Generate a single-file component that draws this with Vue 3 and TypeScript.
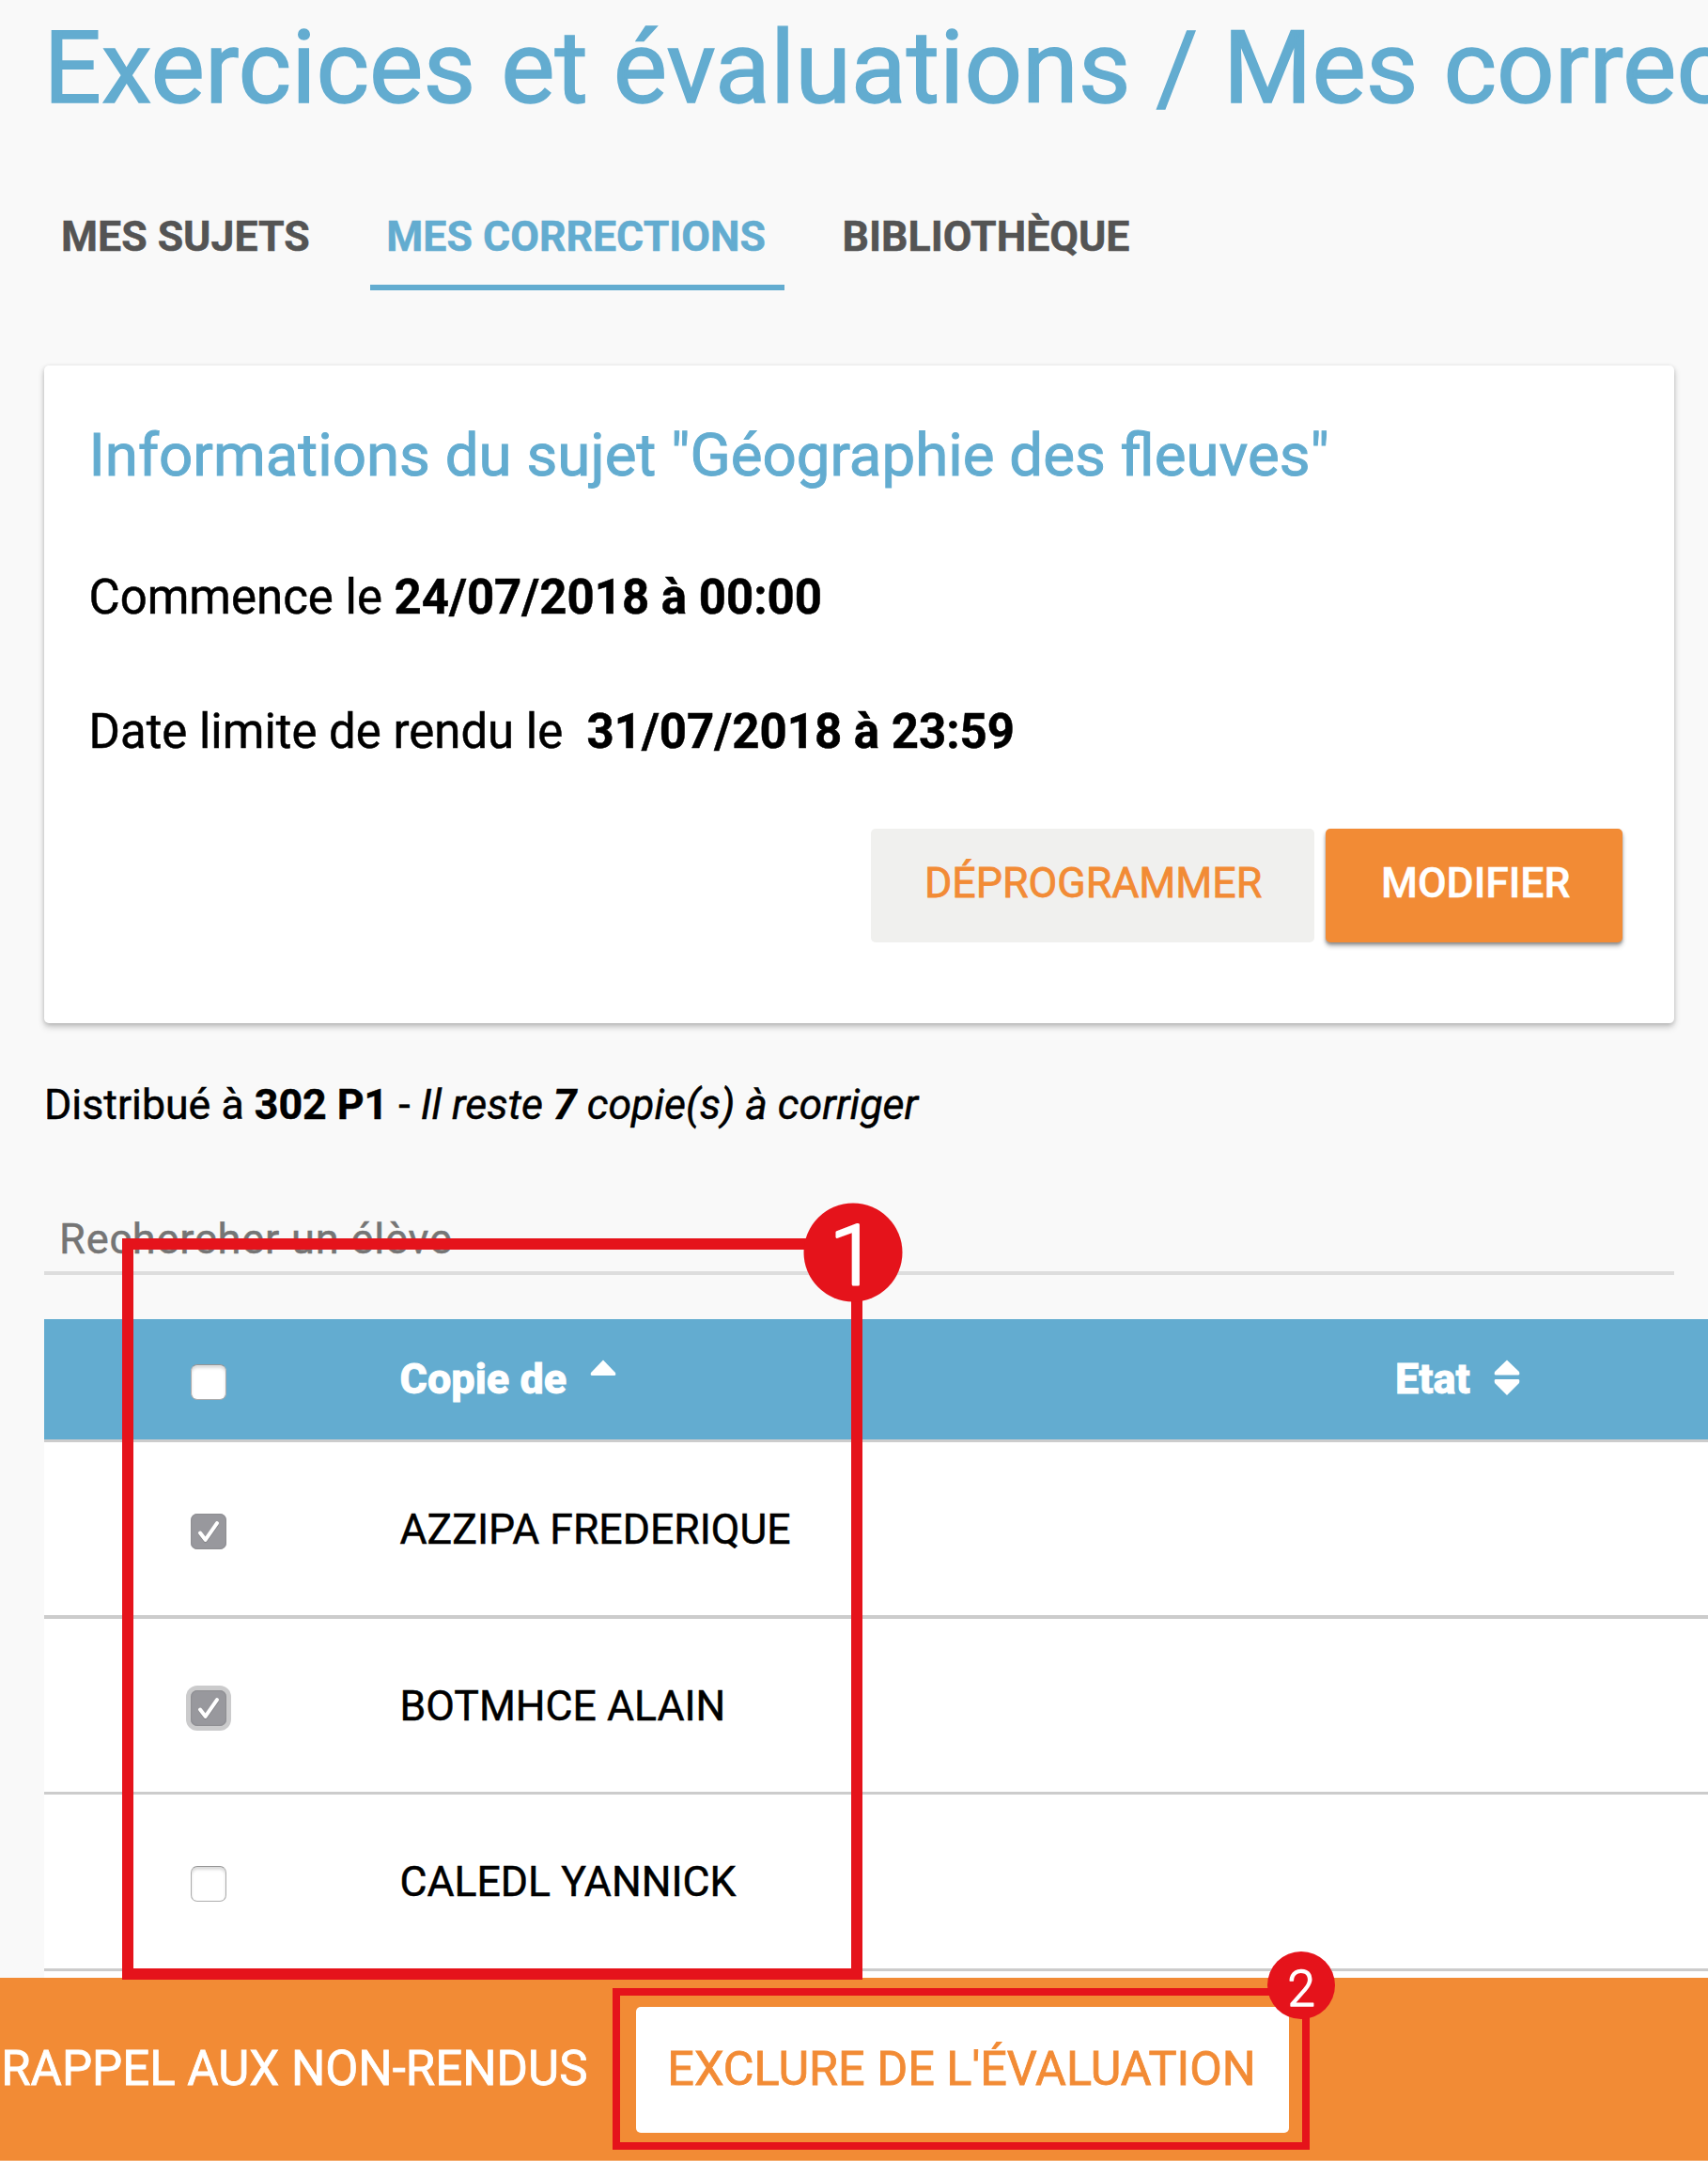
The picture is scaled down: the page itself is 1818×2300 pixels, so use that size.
<script setup lang="ts">
interface Student {
  name: string
  checked: boolean
  focused: boolean
}

const tabs = [
  { label: 'MES SUJETS', active: false },
  { label: 'MES CORRECTIONS', active: true },
  { label: 'BIBLIOTHÈQUE', active: false },
]

const students: Student[] = [
  { name: 'AZZIPA FREDERIQUE', checked: true, focused: false },
  { name: 'BOTMHCE ALAIN', checked: true, focused: true },
  { name: 'CALEDL YANNICK', checked: false, focused: false },
]
</script>

<template>
  <div class="page">
    <main class="content">
      <h1 class="title">Exercices et évaluations / Mes corrections</h1>

      <nav class="tabs">
        <a v-for="tab in tabs" :key="tab.label" class="tab" :class="{ active: tab.active }">{{ tab.label }}</a>
      </nav>

      <section class="card">
        <h2 class="card-title">Informations du sujet "Géographie des fleuves"</h2>
        <p class="line start">Commence le <b>24/07/2018 à 00:00</b></p>
        <p class="line due">Date limite de rendu le&nbsp; <b>31/07/2018 à 23:59</b></p>
        <div class="actions">
          <button class="btn flat">DÉPROGRAMMER</button>
          <button class="btn primary">MODIFIER</button>
        </div>
      </section>

      <p class="summary">Distribué à <b>302 P1</b> - <i>Il reste <b>7</b> copie(s) à corriger</i></p>

      <div class="search">Rechercher un élève</div>

      <div class="table">
        <div class="row head">
          <span class="check-cell"><span class="box"></span></span>
          <span class="name-cell">Copie de
            <svg class="sort" width="28" height="39" viewBox="0 0 28 39">
              <path d="M14 0.5 L27 14 Q28 17 26 17 H2 Q0 17 1 14 Z" fill="#fff" />
            </svg>
          </span>
          <span class="state-cell">Etat
            <svg class="sort" width="28" height="39" viewBox="0 0 28 39">
              <path d="M14 0.5 L27 13 Q28 16.5 26 16.5 H2 Q0 16.5 1 13 Z" fill="#fff" />
              <path d="M14 38 L27 25 Q28 21 26 21 H2 Q0 21 1 25 Z" fill="#fff" />
            </svg>
          </span>
        </div>
        <div v-for="s in students" :key="s.name" class="row">
          <span class="check-cell">
            <span class="box" :class="{ checked: s.checked, focused: s.focused }">
              <svg v-if="s.checked" width="38" height="38" viewBox="0 0 38 38" fill="none" stroke-linecap="round" stroke-linejoin="round">
                <path d="M10 22 L15.6 29.4 L28 12" stroke="#85858a" stroke-width="3.6" />
                <path d="M10 20.5 L15.6 27.8 L28 10.2" stroke="#fff" stroke-width="4" />
              </svg>
            </span>
          </span>
          <span class="name-cell">{{ s.name }}</span>
        </div>
      </div>
    </main>

    <footer class="bar">
      <span class="remind">RAPPEL AUX NON-RENDUS</span>
      <button class="exclude">EXCLURE DE L'ÉVALUATION</button>
    </footer>

    <!-- Step markers laid over the interface -->
    <div class="frame frame-one"></div>
    <div class="frame frame-two"></div>
    <svg class="marker marker-one" width="106" height="106" viewBox="0 0 106 106">
      <circle cx="53" cy="53" r="52.5" fill="#e5131b" />
      <text x="28.2" y="86.6" font-size="89" font-weight="300" stroke-width="3">1</text>
    </svg>
    <svg class="marker marker-two" width="72" height="72" viewBox="0 0 72 72">
      <circle cx="36" cy="36" r="36" fill="#e5131b" />
      <text x="21.6" y="57.6" font-size="53" font-weight="300" stroke-width="1.4">2</text>
    </svg>
  </div>
</template>

<style>
body {
  background: #f9f9f9;
}
</style>

<style scoped>
.page {
  position: relative;
  display: flex;
  flex-direction: column;
  width: 1818px;
  height: 2300px;
  overflow: hidden;
  background: #f9f9f9;
  color: #000;
  font-family: Roboto, sans-serif;
  -webkit-text-stroke: 0.5px;
}
h1,
h2,
p {
  margin: 0;
  font-weight: 400;
}
button {
  border: 0;
  padding: 0;
  font-family: inherit;
  text-align: left;
}
.content {
  height: 2105px;
  flex: none;
  padding-left: 47px;
  box-sizing: border-box;
  overflow: hidden;
  white-space: nowrap;
}
.title {
  height: 202px;
  line-height: 144px;
  font-size: 108.2px;
  color: #63acd0;
  margin-left: -0.6px;
  -webkit-text-stroke: 1.4px;
}
.tabs {
  display: flex;
  gap: 45px;
  margin-left: 1px;
}
.tab {
  padding: 0 19.6px 0 17px;
  line-height: 101px;
  font-size: 44.6px;
  font-weight: 700;
  color: #545454;
  border-bottom: 6px solid transparent;
}
.tab.active {
  color: #63acd0;
  border-color: #63acd0;
}
.card {
  width: 1735px;
  height: 700px;
  box-sizing: border-box;
  margin-top: 80px;
  padding: 48px 55.5px 0 47.5px;
  background: #fff;
  border-radius: 5px;
  box-shadow: 0 4px 7px rgba(0, 0, 0, 0.22), 0 1px 4px rgba(0, 0, 0, 0.12);
}
.card-title {
  line-height: 96px;
  font-size: 63.65px;
  color: #63acd0;
  -webkit-text-stroke: 1px;
}
.line {
  line-height: 60px;
  font-size: 50.95px;
}
.start {
  margin-top: 72.6px;
}
.due {
  margin-top: 83.7px;
}
.actions {
  display: flex;
  justify-content: flex-end;
  gap: 12px;
  margin-top: 72.7px;
}
.btn {
  height: 121px;
  box-sizing: border-box;
  padding-bottom: 5px;
  border-radius: 5px;
}
.flat {
  width: 472px;
  padding-left: 57px;
  background: #f0f0ee;
  color: #f28b35;
  font-size: 44.7px;
  -webkit-text-stroke: 0.8px;
}
.primary {
  width: 315.5px;
  padding-left: 59px;
  background: #f28b35;
  color: #fff;
  font-size: 44.5px;
  font-weight: 500;
  box-shadow: 0 4px 5px rgba(0, 0, 0, 0.28), 0 2px 3px rgba(0, 0, 0, 0.25);
}
.summary {
  margin-top: 56.5px;
  line-height: 60px;
  font-size: 44.7px;
}
.search {
  width: 1735px;
  box-sizing: border-box;
  margin-top: 83.5px;
  padding: 0 0 4px 16px;
  line-height: 60px;
  font-size: 45.2px;
  letter-spacing: 0.8px;
  color: #757575;
  border-bottom: 4px solid #ddd;
}
.table {
  margin-top: 47px;
  background: #fff;
  padding-bottom: 10px;
}
.row {
  display: grid;
  grid-template-columns: 378.5px 1059.5px 1fr;
  height: 184px;
  border-bottom: 4px solid #ccc;
  line-height: 187px;
  font-size: 44.55px;
}
.row:nth-child(3) {
  border-bottom-width: 3px;
}
.row:nth-child(4) {
  height: 185px;
  border-bottom-width: 3px;
}
.head {
  height: 128px;
  border-bottom-width: 3px;
  line-height: 128px;
  background: #63acd0;
  color: #fff;
  font-size: 45px;
  font-weight: 800;
  -webkit-text-stroke: 0.8px;
}
.check-cell {
  display: flex;
  align-items: flex-start;
  padding: 76px 0 0 156px;
}
.head .check-cell {
  padding-top: 48px;
}
.sort {
  margin-left: 14px;
  vertical-align: -3px;
}
.box {
  width: 38px;
  height: 38px;
  box-sizing: border-box;
  border: 1px solid #adadad;
  border-top-color: #949494;
  border-radius: 7px;
  background: #fff;
  box-shadow: inset 0 3px 3px rgba(0, 0, 0, 0.14);
}
.box svg {
  display: block;
}
.box.checked {
  border: 0;
  background: #98989d;
  box-shadow: inset 0 0 1px 1px #8e8e93;
}
.box.focused {
  box-shadow: inset 0 0 1px 1px #8e8e93, 0 0 0 5px #cbcbcc;
}
.bar {
  display: flex;
  align-items: flex-start;
  flex: 1;
  background: #f28b35;
  border-bottom: 1px solid #f5ae72;
  -webkit-text-stroke: 0.8px;
}
.remind {
  width: 675.6px;
  padding-left: 1.2px;
  box-sizing: border-box;
  line-height: 194px;
  font-size: 51px;
  color: #fff;
  white-space: nowrap;
}
.exclude {
  width: 695px;
  height: 134px;
  margin: 31px 0 0 1.2px;
  padding: 0 0 4px 33.5px;
  border-radius: 5px;
  background: #fff;
  color: #f28b35;
  font-size: 50.35px;
  white-space: nowrap;
}
.frame {
  position: absolute;
  box-sizing: border-box;
  border: 12.5px solid #e5131b;
}
.frame-one {
  left: 129.5px;
  top: 1318px;
  width: 788.5px;
  height: 789px;
}
.frame-two {
  left: 651.5px;
  top: 2116px;
  width: 742.5px;
  height: 171.5px;
  border-width: 8px;
}
.marker {
  position: absolute;
}
.marker text {
  font-family: Roboto, sans-serif;
  fill: #fff;
  stroke: #fff;
  stroke-linejoin: round;
}
.marker-one {
  left: 854.5px;
  top: 1280px;
}
.marker-two {
  left: 1349.3px;
  top: 2076.5px;
}
</style>
